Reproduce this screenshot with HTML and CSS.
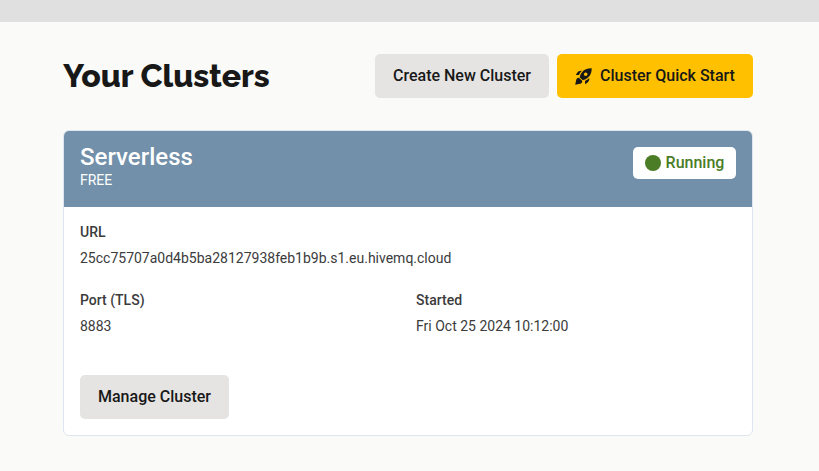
FILE: index.html
```html
<!DOCTYPE html>
<html lang="en">
<head>
<meta charset="utf-8">
<title>Your Clusters</title>
<link rel="stylesheet" href="styles.css">
</head>
<body>
<div class="topbar"></div>
<main class="page">
  <header class="head">
    <h1 class="title">Your Clusters</h1>
    <div class="actions">
      <button class="btn create">Create New Cluster</button>
      <button class="btn primary">
        <svg class="rocket" viewBox="0 0 17 17" aria-hidden="true"><g fill="currentColor"><path fill-rule="evenodd" d="M16.700.3C12.500.2 9.300 1.400 7.200 4 5.900 5.600 5 7.500 4.700 9.200L7.800 12.300c1.800-.4 3.700-1.300 5.200-2.700C15.700 7.300 16.800 4.300 16.700.3ZM10.700 4.500a1.800 1.800 0 1 0 0 3.600 1.800 1.800 0 0 0 0-3.600Z"/><path d="M6.900 2.800C4.900 2.500 3.400 3.200 2.200 4.700L.8 6.900 4.100 7C4.600 5.400 5.500 4 6.900 2.800ZM14.200 10.100C14.500 12.100 13.800 13.600 12.300 14.800L10.100 16.200 10 12.900C11.600 12.400 13 11.500 14.200 10.100ZM4 9.700C2.600 9.800 1.600 10.500 1.200 11.800L.2 16.800 5.200 15.800C6.500 15.400 7.200 14.400 7.300 13Z"/></g></svg>
        <span>Cluster Quick Start</span>
      </button>
    </div>
  </header>
  <section class="card">
    <div class="card-head">
      <div>
        <h2 class="name">Serverless</h2>
        <div class="plan">FREE</div>
      </div>
      <div class="status"><span class="dot"></span><span>Running</span></div>
    </div>
    <div class="card-body">
      <dl class="details">
        <div class="field wide"><dt>URL</dt><dd>25cc75707a0d4b5ba28127938feb1b9b.s1.eu.hivemq.cloud</dd></div>
        <div class="field"><dt>Port (TLS)</dt><dd>8883</dd></div>
        <div class="field"><dt>Started</dt><dd>Fri Oct 25 2024 10:12:00</dd></div>
      </dl>
      <button class="btn manage">Manage Cluster</button>
    </div>
  </section>
</main>
</body>
</html>
```
FILE: styles.css
```css
* { box-sizing: border-box; margin: 0; }
body { background: #fafaf9; color: #181818; font-family: Roboto, sans-serif; }
.topbar { height: 22px; background: #e0e0e0; }
.page { width: 690px; margin: 32px 0 0 63px; }
.head { display: flex; justify-content: space-between; align-items: center; height: 44px; }
.title { font: 800 32px/44px Raleway, "Open Sans", sans-serif; white-space: nowrap; }
.actions { display: flex; gap: 8px; }
.btn { display: flex; align-items: center; justify-content: center; height: 44px; padding: 0; border: 0; border-radius: 5px; background: #e5e4e2; color: #181818; font: 500 16px/24px Roboto, sans-serif; white-space: nowrap; }
.create { width: 174px; }
.primary { width: 196px; gap: 8px; background: #ffc000; }
.rocket { width: 17px; height: 17px; }
.card { height: 306px; margin-top: 32px; border: 1px solid #dfe5ee; border-radius: 6px; background: #fff; overflow: hidden; }
.card-head { display: flex; justify-content: space-between; height: 76px; padding: 16px; background: #7290a9; color: #fff; }
.name { font: 500 24px/20px Roboto, sans-serif; }
.plan { margin-top: 3px; font-size: 14px; line-height: 20px; }
.status { display: flex; align-items: center; justify-content: center; gap: 5px; width: 103px; height: 32px; border-radius: 5px; background: #fff; color: #4a7d26; font-size: 16px; line-height: 20px; font-weight: 500; }
.dot { width: 16px; height: 16px; border-radius: 50%; background: #4a7d26; }
.card-body { padding: 16px; }
.details { display: grid; grid-template-columns: 1fr 1fr; column-gap: 16px; row-gap: 24px; font-size: 14px; line-height: 18px; color: #3b3b3b; }
.wide { grid-column: 1 / -1; }
.field dt { font-weight: 500; }
.field dd { margin-top: 8px; }
.manage { width: 149px; margin-top: 40px; }
```
